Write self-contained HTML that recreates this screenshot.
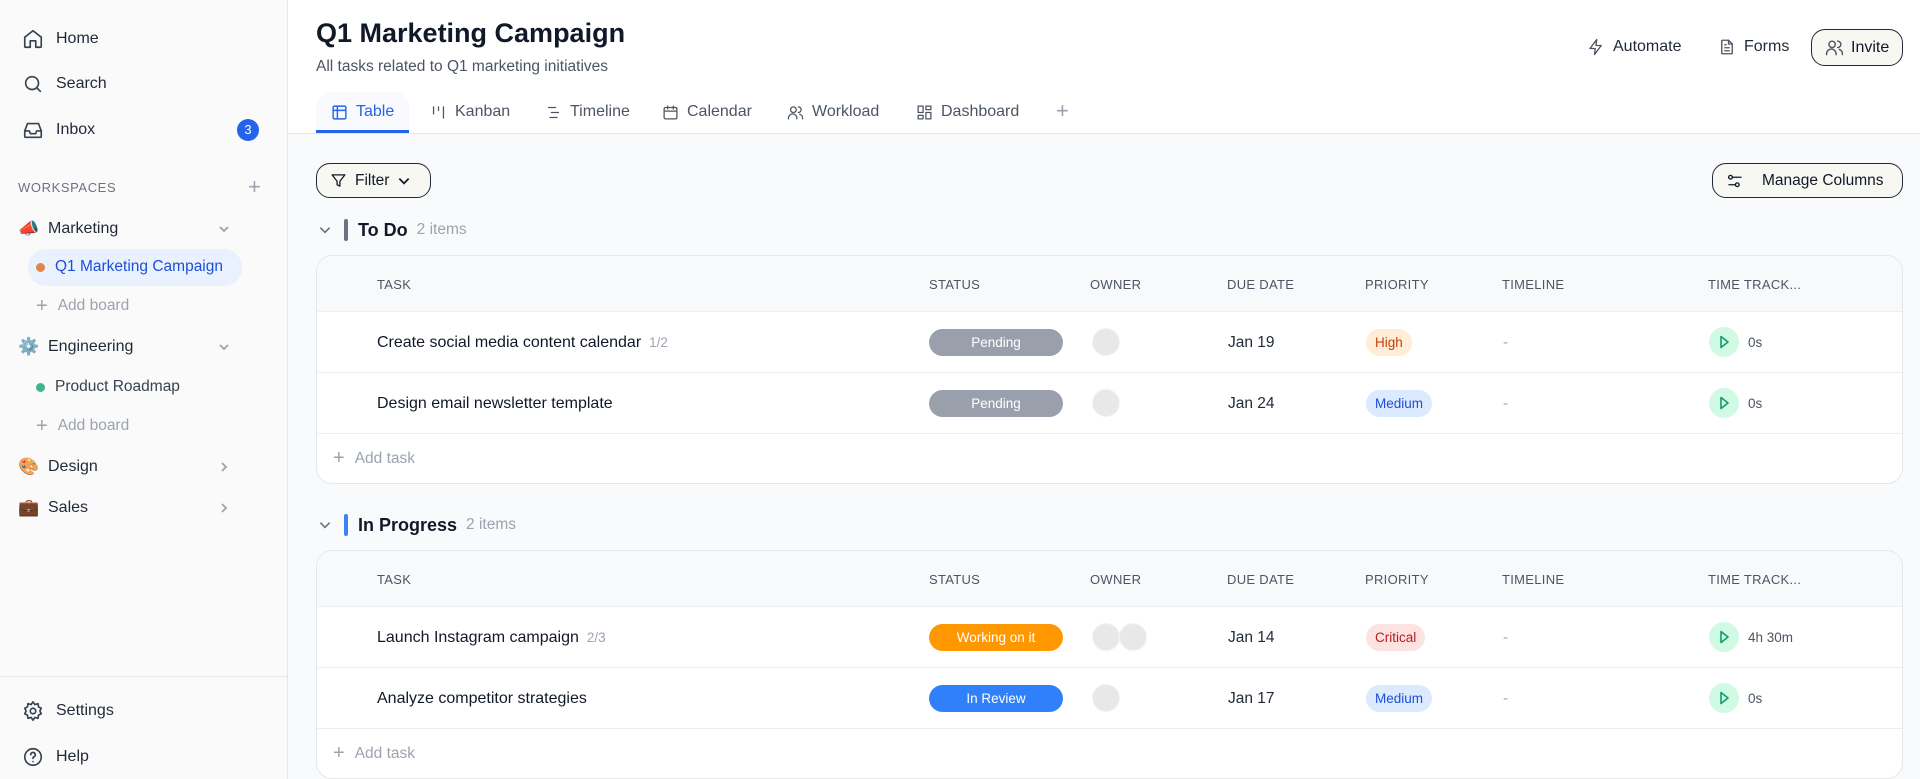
<!DOCTYPE html>
<html><head><meta charset="utf-8"><style>
*{box-sizing:border-box;margin:0;padding:0}
body{width:1920px;height:779px;overflow:hidden;font-family:"Liberation Sans",sans-serif;color:#1f2937;background:#fff;position:relative}
.a{position:absolute}
.sb{left:0;top:0;width:288px;height:779px;background:#fafafa;border-right:1px solid #e5e7eb}
.nav{position:absolute;left:22px;display:flex;align-items:center;font-size:16px;color:#1f2937;height:24px}
.nav svg{width:22px;height:22px;margin-right:12px;fill:none;stroke:#374151;stroke-width:1.8;stroke-linecap:round;stroke-linejoin:round}
.ws{position:absolute;left:18px;display:flex;align-items:center;font-size:16px;color:#1f2937;height:24px}
.ws .e{width:22px;font-size:17px;margin-right:8px}
.chev{position:absolute;left:218px;width:12px;height:12px;fill:none;stroke:#9ca3af;stroke-width:1.8}
.sub{position:absolute;left:36px;font-size:15.5px;display:flex;align-items:center;height:24px;color:#374151}
.dot{width:9px;height:9px;border-radius:50%;margin-right:10px}
.ic{fill:none;stroke:#4b5563;stroke-width:1.8;stroke-linecap:round;stroke-linejoin:round}
.tab{position:absolute;top:101px;display:flex;align-items:center;font-size:16px;color:#4b5563;height:22px}
.tab svg{width:17px;height:17px;margin-right:8px}
.btn{position:absolute;border:1.5px solid #1f2937;border-radius:14px;background:#f8f8f3;display:flex;align-items:center;font-size:15.5px;color:#111827}
.card{position:absolute;left:316px;width:1587px;background:#fff;border:1px solid #e5e7eb;border-radius:16px;overflow:hidden}
.hd{height:56px;background:#f8f9fb;border-bottom:1px solid #eceef1;position:relative}
.hd span{position:absolute;top:21px;font-size:13px;color:#4b5563;letter-spacing:.3px}
.row{height:61px;border-bottom:1px solid #eceef1;position:relative}
.row>*{position:absolute}
.tk{left:60px;top:22px;font-size:16px;color:#111827}
.tk small{font-size:13.5px;color:#9ca3af;margin-left:8px}
.st{left:612px;top:17px;width:134px;height:27px;border-radius:14px;color:#fff;font-size:13.5px;text-align:center;line-height:27px}
.ow{top:16px;width:28px;height:28px;border-radius:50%;background:#e8e8e8;border:1px solid #f3f3f3}
.dd{left:911px;top:22px;font-size:15.5px;color:#1f2937}
.pr{left:1049px;top:17px;height:27px;border-radius:14px;padding:0 9px;font-size:13.5px;line-height:27px}
.tl{left:1186px;top:22px;color:#9ca3af;font-size:15px}
.pl{left:1392px;top:15px;width:30px;height:30px;border-radius:50%;background:#d1fae5}
.ts{left:1431px;top:23px;font-size:13.5px;color:#4b5563}
.add{height:50px;position:relative;font-size:15.5px;color:#9ca3af}
.add>div{position:absolute;left:16px;top:13px;display:flex;align-items:center}
.grp{position:absolute;left:316px;display:flex;align-items:center;height:26px}
</style></head><body>
<div class="a sb">
  <div class="nav" style="top:27px"><svg viewBox="0 0 24 24"><path d="M3 10l9-7 9 7v10a1 1 0 0 1-1 1h-5v-7H9v7H4a1 1 0 0 1-1-1z"/></svg>Home</div>
  <div class="nav" style="top:72px"><svg viewBox="0 0 24 24"><circle cx="11" cy="11" r="7"/><path d="M20 20l-4-4"/></svg>Search</div>
  <div class="nav" style="top:118px"><svg viewBox="0 0 24 24"><path d="M3 13l3-8h12l3 8v6a1 1 0 0 1-1 1H4a1 1 0 0 1-1-1z"/><path d="M3 13h5l1 3h6l1-3h5"/></svg>Inbox</div>
  <div class="a" style="left:237px;top:119px;width:22px;height:22px;border-radius:50%;background:#2563eb;color:#fff;font-size:13px;text-align:center;line-height:22px">3</div>
  <div class="a" style="left:18px;top:180px;font-size:13px;color:#6b7280;letter-spacing:.6px">WORKSPACES</div>
  <div class="a" style="left:248px;top:174px;font-size:22px;color:#9ca3af;font-weight:300">+</div>
  <div class="ws" style="top:217px"><span class="e">📣</span>Marketing</div>
  <svg class="chev" style="top:223px" viewBox="0 0 12 12"><path d="M2 4l4 4 4-4"/></svg>
  <div class="a" style="left:28px;top:249px;width:214px;height:37px;border-radius:18px;background:#eaf1fe"></div>
  <div class="sub" style="top:255px;color:#1d4ed8"><span class="dot" style="background:#e0844a"></span>Q1 Marketing Campaign</div>
  <div class="sub" style="top:294px;color:#9ca3af"><span style="font-size:20px;margin-right:10px;font-weight:300">+</span>Add board</div>
  <div class="ws" style="top:335px"><span class="e">⚙️</span>Engineering</div>
  <svg class="chev" style="top:341px" viewBox="0 0 12 12"><path d="M2 4l4 4 4-4"/></svg>
  <div class="sub" style="top:375px"><span class="dot" style="background:#3fb48f"></span>Product Roadmap</div>
  <div class="sub" style="top:414px;color:#9ca3af"><span style="font-size:20px;margin-right:10px;font-weight:300">+</span>Add board</div>
  <div class="ws" style="top:455px"><span class="e">🎨</span>Design</div>
  <svg class="chev" style="top:461px" viewBox="0 0 12 12"><path d="M4 2l4 4-4 4"/></svg>
  <div class="ws" style="top:496px"><span class="e">💼</span>Sales</div>
  <svg class="chev" style="top:502px" viewBox="0 0 12 12"><path d="M4 2l4 4-4 4"/></svg>
  <div class="a" style="left:0;top:676px;width:287px;border-top:1px solid #e5e7eb"></div>
  <div class="nav" style="top:699px"><svg viewBox="0 0 24 24"><circle cx="12" cy="12" r="3"/><path d="M12 2l2 3 3.5-1 .5 3.5L21 9l-1.5 3 1.5 3-3 1.5-.5 3.5-3.5-1-2 3-2-3-3.5 1-.5-3.5L3 15l1.5-3L3 9l3-1.5L6.5 4 10 5z"/></svg>Settings</div>
  <div class="nav" style="top:745px"><svg viewBox="0 0 24 24"><circle cx="12" cy="12" r="9"/><path d="M9.5 9.5a2.5 2.5 0 1 1 3.5 2.3c-.7.3-1 .9-1 1.7M12 17h.01"/></svg>Help</div>
</div>

<div class="a" style="left:316px;top:18px;font-size:27px;font-weight:bold;color:#111827">Q1 Marketing Campaign</div>
<div class="a" style="left:316px;top:58px;font-size:15.5px;color:#4b5563">All tasks related to Q1 marketing initiatives</div>

<div class="a" style="left:1587px;top:38px;display:flex;align-items:center;font-size:16px;color:#1f2937"><svg width="18" height="18" viewBox="0 0 24 24" class="ic" style="margin-right:8px"><path d="M13 2L4 14h7l-1 8 9-12h-7z"/></svg>Automate</div>
<div class="a" style="left:1718px;top:38px;display:flex;align-items:center;font-size:16px;color:#1f2937"><svg width="18" height="18" viewBox="0 0 24 24" class="ic" style="margin-right:8px"><path d="M14 3H6a1 1 0 0 0-1 1v16a1 1 0 0 0 1 1h12a1 1 0 0 0 1-1V8z"/><path d="M14 3v5h5M9 13h6M9 17h6M9 9h2"/></svg>Forms</div>
<div class="btn" style="left:1811px;top:29px;width:92px;height:37px;padding-left:13px;font-size:16px"><svg width="19" height="19" viewBox="0 0 24 24" class="ic" style="margin-right:7px"><circle cx="9" cy="8" r="4"/><path d="M2 21v-1a6 6 0 0 1 12 0v1M16 4a4 4 0 0 1 0 8M22 21v-1a6 6 0 0 0-4-5.6"/></svg>Invite</div>

<div class="tab" style="left:331px;color:#2563eb"><svg viewBox="0 0 24 24" style="fill:none;stroke:#2563eb;stroke-width:2"><rect x="3" y="3" width="18" height="18" rx="2"/><path d="M3 9h18M9 3v18"/></svg>Table</div>
<div class="a" style="left:316px;top:92px;width:93px;height:40px;background:#f8fafd;border-radius:14px 14px 0 0;z-index:-1"></div>
<div class="a" style="left:316px;top:130px;width:93px;height:3px;background:#2563eb"></div>
<div class="tab" style="left:430px"><svg viewBox="0 0 24 24" class="ic"><path d="M5 4v10M12 4v5M19 4v16"/></svg>Kanban</div>
<div class="tab" style="left:545px"><svg viewBox="0 0 24 24" class="ic"><path d="M5 5h10M9 12h10M7 19h10"/></svg>Timeline</div>
<div class="tab" style="left:662px"><svg viewBox="0 0 24 24" class="ic"><rect x="3" y="5" width="18" height="16" rx="2"/><path d="M3 10h18M8 3v4M16 3v4"/></svg>Calendar</div>
<div class="tab" style="left:787px"><svg viewBox="0 0 24 24" class="ic"><circle cx="9" cy="8" r="4"/><path d="M2 21v-1a6 6 0 0 1 12 0v1M16 4a4 4 0 0 1 0 8M22 21v-1a6 6 0 0 0-4-5.6"/></svg>Workload</div>
<div class="tab" style="left:916px"><svg viewBox="0 0 24 24" class="ic"><rect x="3" y="3" width="7" height="9"/><rect x="14" y="3" width="7" height="5"/><rect x="14" y="12" width="7" height="9"/><rect x="3" y="16" width="7" height="5"/></svg>Dashboard</div>
<div class="a" style="left:1056px;top:98px;font-size:22px;color:#9ca3af;font-weight:300">+</div>

<div class="a" style="left:288px;top:133px;width:1632px;height:646px;background:#f9fafb;border-top:1px solid #e5e7eb;z-index:-2"></div>

<div class="btn" style="left:316px;top:163px;width:115px;height:35px;padding-left:13px"><svg width="17" height="17" viewBox="0 0 24 24" class="ic" style="stroke:#111827;margin-right:8px"><path d="M3 4h18l-7 9v7l-4-2v-5z"/></svg>Filter<svg width="14" height="14" viewBox="0 0 12 12" style="margin-left:8px;fill:none;stroke:#111827;stroke-width:1.5"><path d="M2 4l4 4 4-4"/></svg></div>
<div class="btn" style="left:1712px;top:163px;width:191px;height:35px;padding-left:13px"><svg width="18" height="18" viewBox="0 0 24 24" class="ic" style="stroke:#111827;margin-right:18px"><circle cx="6" cy="7" r="2.5"/><circle cx="15" cy="17" r="2.5"/><path d="M9 7h11M4 17h8.5"/></svg>Manage Columns</div>

<div class="grp" style="top:217px"><svg width="14" height="14" viewBox="0 0 12 12" style="fill:none;stroke:#6b7280;stroke-width:1.4;margin-left:2px"><path d="M2 4l4 4 4-4"/></svg><div style="width:4px;height:22px;background:#6b7280;border-radius:2px;margin-left:12px;margin-right:10px"></div><b style="font-size:18px;color:#111827">To Do</b><span style="font-size:15.5px;color:#9ca3af;margin-left:9px">2 items</span></div>

<div class="card" style="top:255px;height:229px">
  <div class="hd"><span style="left:60px">TASK</span><span style="left:612px">STATUS</span><span style="left:773px">OWNER</span><span style="left:910px">DUE DATE</span><span style="left:1048px">PRIORITY</span><span style="left:1185px">TIMELINE</span><span style="left:1391px">TIME TRACK...</span></div>
  <div class="row"><div class="tk">Create social media content calendar<small>1/2</small></div><div class="st" style="background:#9aa0ab">Pending</div><div class="ow" style="left:775px"></div><div class="dd">Jan 19</div><div class="pr" style="background:#ffedd5;color:#c2410c">High</div><div class="tl">-</div><div class="pl"><svg width="30" height="30" viewBox="0 0 30 30"><path d="M12 9.5l7 5.5-7 5.5z" fill="none" stroke="#0f9d6b" stroke-width="1.6" stroke-linejoin="round"/></svg></div><div class="ts">0s</div></div>
  <div class="row"><div class="tk">Design email newsletter template</div><div class="st" style="background:#9aa0ab">Pending</div><div class="ow" style="left:775px"></div><div class="dd">Jan 24</div><div class="pr" style="background:#dbeafe;color:#1d4ed8">Medium</div><div class="tl">-</div><div class="pl"><svg width="30" height="30" viewBox="0 0 30 30"><path d="M12 9.5l7 5.5-7 5.5z" fill="none" stroke="#0f9d6b" stroke-width="1.6" stroke-linejoin="round"/></svg></div><div class="ts">0s</div></div>
  <div class="add"><div><span style="font-size:20px;font-weight:300;margin-right:10px">+</span>Add task</div></div>
</div>

<div class="grp" style="top:512px"><svg width="14" height="14" viewBox="0 0 12 12" style="fill:none;stroke:#6b7280;stroke-width:1.4;margin-left:2px"><path d="M2 4l4 4 4-4"/></svg><div style="width:4px;height:22px;background:#3b82f6;border-radius:2px;margin-left:12px;margin-right:10px"></div><b style="font-size:18px;color:#111827">In Progress</b><span style="font-size:15.5px;color:#9ca3af;margin-left:9px">2 items</span></div>

<div class="card" style="top:550px;height:229px">
  <div class="hd"><span style="left:60px">TASK</span><span style="left:612px">STATUS</span><span style="left:773px">OWNER</span><span style="left:910px">DUE DATE</span><span style="left:1048px">PRIORITY</span><span style="left:1185px">TIMELINE</span><span style="left:1391px">TIME TRACK...</span></div>
  <div class="row"><div class="tk">Launch Instagram campaign<small>2/3</small></div><div class="st" style="background:#ff9800">Working on it</div><div class="ow" style="left:775px"></div><div class="ow" style="left:802px"></div><div class="dd">Jan 14</div><div class="pr" style="background:#fde2e2;color:#b91c1c">Critical</div><div class="tl">-</div><div class="pl"><svg width="30" height="30" viewBox="0 0 30 30"><path d="M12 9.5l7 5.5-7 5.5z" fill="none" stroke="#0f9d6b" stroke-width="1.6" stroke-linejoin="round"/></svg></div><div class="ts">4h 30m</div></div>
  <div class="row"><div class="tk">Analyze competitor strategies</div><div class="st" style="background:#2f80fa">In Review</div><div class="ow" style="left:775px"></div><div class="dd">Jan 17</div><div class="pr" style="background:#dbeafe;color:#1d4ed8">Medium</div><div class="tl">-</div><div class="pl"><svg width="30" height="30" viewBox="0 0 30 30"><path d="M12 9.5l7 5.5-7 5.5z" fill="none" stroke="#0f9d6b" stroke-width="1.6" stroke-linejoin="round"/></svg></div><div class="ts">0s</div></div>
  <div class="add"><div><span style="font-size:20px;font-weight:300;margin-right:10px">+</span>Add task</div></div>
</div>
</body></html>
